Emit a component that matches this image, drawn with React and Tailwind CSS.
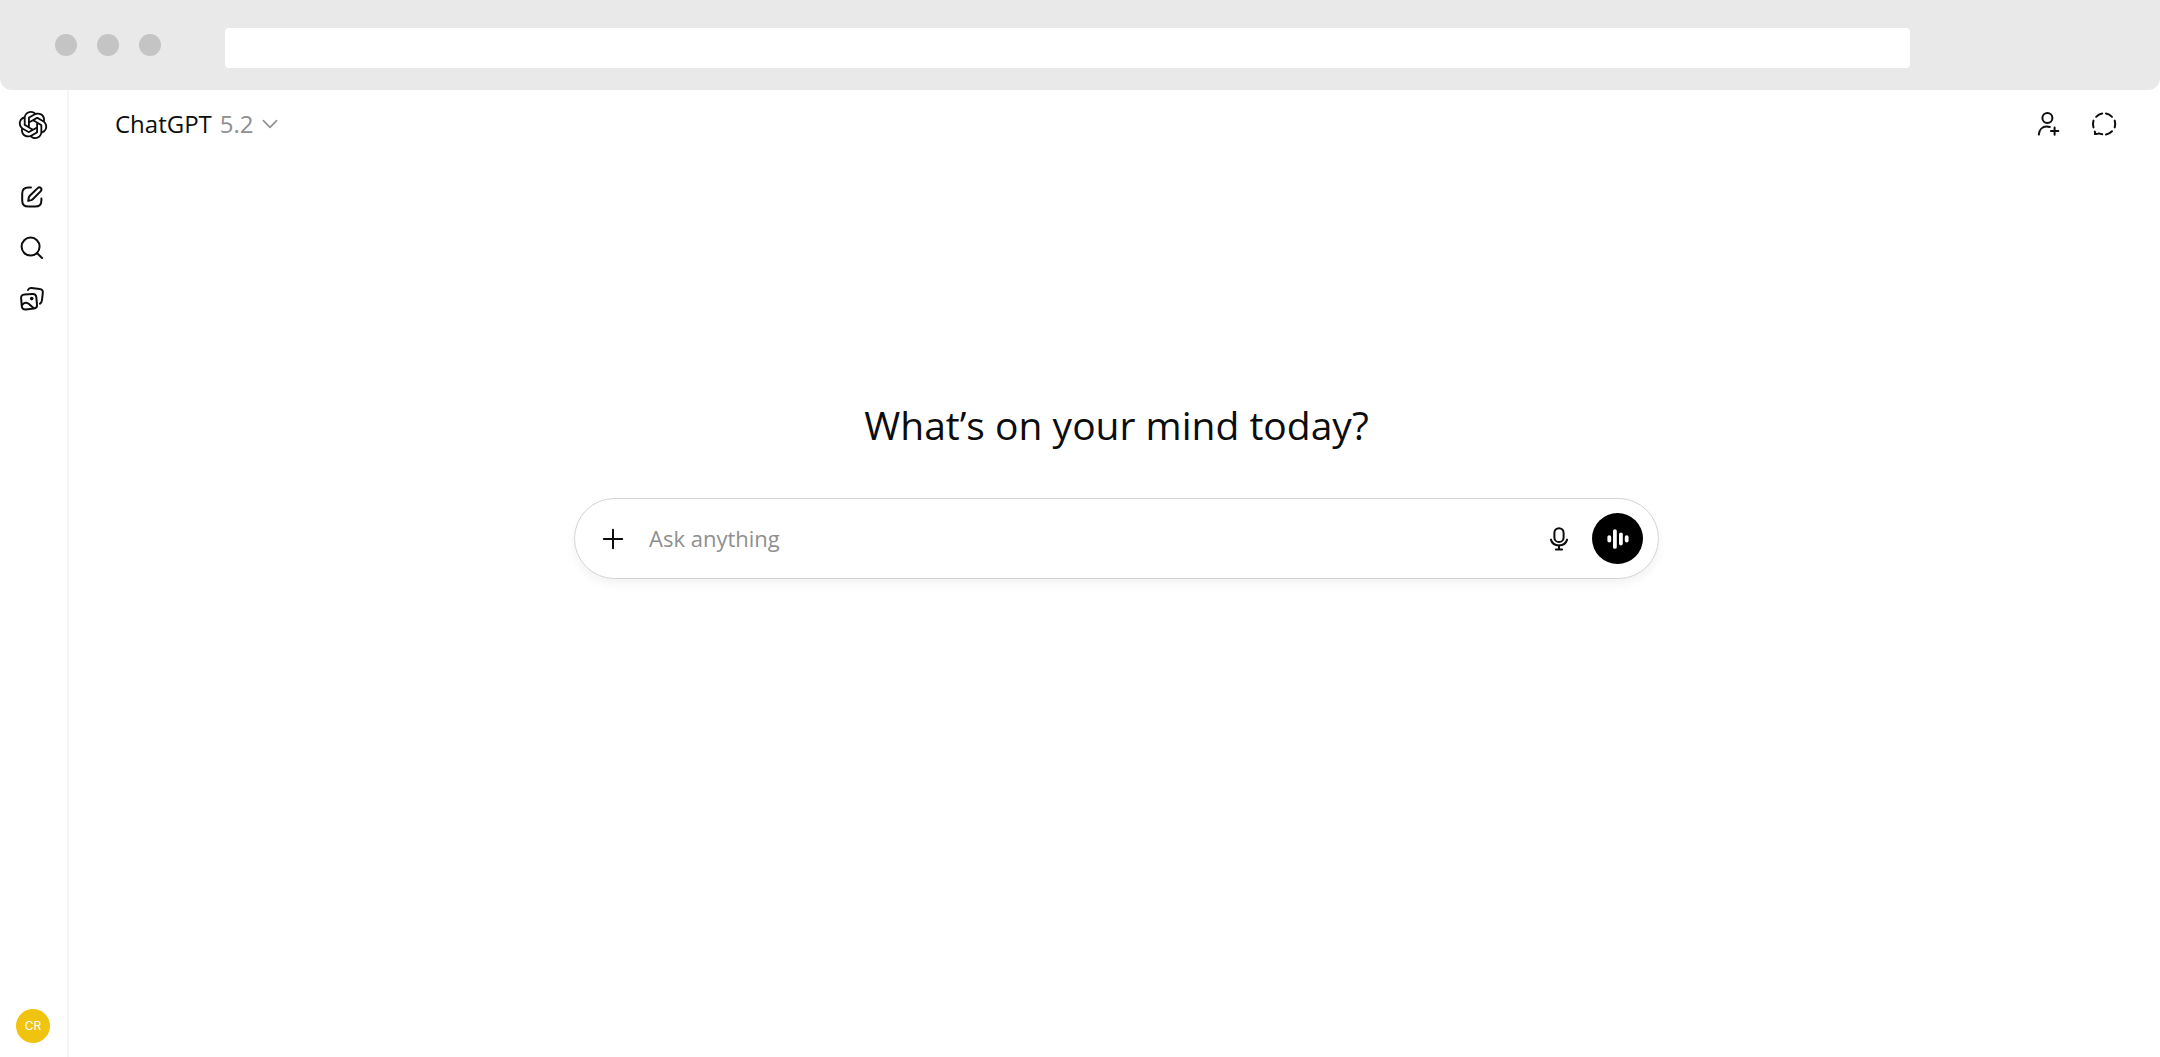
const line = {
  fill: "none",
  stroke: "currentColor",
  strokeWidth: 2,
  strokeLinecap: "round",
  strokeLinejoin: "round",
  "aria-hidden": true,
};

function Logo() {
  return (
    <svg className="size-[34px] shrink-0" viewBox="0 0 20 20" fill="currentColor" aria-hidden="true">
      <path d="M11.2475 18.25C10.6975 18.25 10.175 18.1455 9.67999 17.9365C9.18499 17.7275 8.74499 17.436 8.35999 17.062C7.94199 17.205 7.50749 17.2765 7.05649 17.2765C6.31949 17.2765 5.63749 17.095 5.01049 16.732C4.38349 16.369 3.87749 15.874 3.49249 15.247C3.11849 14.62 2.93149 13.9215 2.93149 13.1515C2.93149 12.8325 2.97549 12.486 3.06349 12.112C2.62349 11.705 2.28249 11.2375 2.04049 10.7095C1.79849 10.1705 1.67749 9.6095 1.67749 9.0265C1.67749 8.4325 1.80399 7.8605 2.05699 7.3105C2.30999 6.7605 2.66199 6.2875 3.11299 5.8915C3.57499 5.4845 4.10849 5.204 4.71349 5.05C4.83449 4.423 5.08749 3.862 5.47249 3.367C5.86849 2.861 6.35249 2.465 6.92449 2.179C7.49649 1.893 8.10699 1.75 8.75599 1.75C9.30599 1.75 9.82849 1.8545 10.3235 2.0635C10.8185 2.2725 11.2585 2.564 11.6435 2.938C12.0615 2.795 12.496 2.7235 12.947 2.7235C13.684 2.7235 14.366 2.905 14.993 3.268C15.62 3.631 16.1205 4.126 16.4945 4.753C16.8795 5.38 17.072 6.0785 17.072 6.8485C17.072 7.1675 17.028 7.514 16.94 7.888C17.38 8.295 17.721 8.768 17.963 9.307C18.205 9.835 18.326 10.3905 18.326 10.9735C18.326 11.5675 18.1995 12.1395 17.9465 12.6895C17.6935 13.2395 17.336 13.718 16.874 14.125C16.423 14.521 15.895 14.796 15.29 14.95C15.169 15.577 14.9105 16.138 14.5145 16.633C14.1295 17.139 13.651 17.535 13.079 17.821C12.507 18.107 11.8965 18.25 11.2475 18.25ZM7.17199 16.1875C7.72199 16.1875 8.20049 16.072 8.60749 15.841L11.7095 14.059C11.8195 13.982 11.8745 13.8775 11.8745 13.7455V12.3265L7.88149 14.62C7.63949 14.763 7.39749 14.763 7.15549 14.62L4.03699 12.8215C4.03699 12.8545 4.03149 12.893 4.02049 12.937C4.02049 12.981 4.02049 13.047 4.02049 13.135C4.02049 13.696 4.15249 14.213 4.41649 14.686C4.69149 15.148 5.07099 15.511 5.55499 15.775C6.03899 16.05 6.57799 16.1875 7.17199 16.1875ZM7.33699 13.498C7.40299 13.531 7.46349 13.5475 7.51849 13.5475C7.57349 13.5475 7.62849 13.531 7.68349 13.498L8.92099 12.7885L4.94449 10.4785C4.70249 10.3355 4.58149 10.121 4.58149 9.835V6.2545C4.03149 6.4965 3.59149 6.8705 3.26149 7.3765C2.93149 7.8715 2.76649 8.4215 2.76649 9.0265C2.76649 9.5655 2.90399 10.0825 3.17899 10.5775C3.45399 11.0725 3.81149 11.4465 4.25149 11.6995L7.33699 13.498ZM11.2475 17.161C11.8305 17.161 12.3585 17.029 12.8315 16.765C13.3045 16.501 13.6785 16.138 13.9535 15.676C14.2285 15.214 14.366 14.697 14.366 14.125V10.561C14.366 10.429 14.311 10.33 14.201 10.264L12.947 9.538V14.1415C12.947 14.4275 12.826 14.642 12.584 14.785L9.46549 16.5835C10.0045 16.9685 10.5985 17.161 11.2475 17.161ZM11.8745 11.122V8.878L10.01 7.822L8.12899 8.878V11.122L10.01 12.178L11.8745 11.122ZM7.05649 5.8585C7.05649 5.5725 7.17749 5.358 7.41949 5.215L10.538 3.4165C9.99899 3.0315 9.40499 2.839 8.75599 2.839C8.17299 2.839 7.64499 2.971 7.17199 3.235C6.69899 3.499 6.32499 3.862 6.04999 4.324C5.78599 4.786 5.65399 5.303 5.65399 5.875V9.4225C5.65399 9.5545 5.70899 9.659 5.81899 9.736L7.05649 10.462V5.8585ZM15.4385 13.7455C15.9885 13.5035 16.423 13.1295 16.742 12.6235C17.072 12.1175 17.237 11.5675 17.237 10.9735C17.237 10.4345 17.0995 9.9175 16.8245 9.4225C16.5495 8.9275 16.192 8.5535 15.752 8.3005L12.6665 6.5185C12.6005 6.4745 12.54 6.458 12.485 6.469C12.43 6.469 12.375 6.4855 12.32 6.5185L11.0825 7.2115L15.0755 9.538C15.1965 9.604 15.2845 9.692 15.3395 9.802C15.4055 9.901 15.4385 10.022 15.4385 10.165V13.7455ZM12.122 5.3635C12.364 5.2095 12.606 5.2095 12.848 5.3635L15.983 7.195C15.983 7.118 15.983 7.019 15.983 6.898C15.983 6.37 15.851 5.8695 15.587 5.3965C15.334 4.9125 14.9655 4.5275 14.4815 4.2415C14.0085 3.9555 13.4585 3.8125 12.8315 3.8125C12.2815 3.8125 11.803 3.928 11.396 4.159L8.29399 5.941C8.18399 6.018 8.12899 6.1225 8.12899 6.2545V7.6735L12.122 5.3635Z" />
    </svg>
  );
}

function ComposeIcon() {
  return (
    <svg className="size-6" viewBox="0 0 24 24" {...line}>
      <path d="M11 2.6 H8.5 C4.2 2.6 2.2 4.6 2.2 8.6 V15.4 C2.2 19.6 4.2 21.6 8.5 21.6 H15 C19.4 21.6 21.4 19.6 21.4 15.4 V13.6" />
      <path d="M8.2 15.9 L8.8 12.6 C8.9 11.9 9.3 11.2 9.8 10.7 L17.7 3.1 C18.6 2.2 19.9 2.2 20.8 3 C21.7 3.9 21.7 5.2 20.8 6.1 L13 14 C12.5 14.5 12 14.9 11.3 15.1 Z" />
    </svg>
  );
}

function SearchIcon() {
  return (
    <svg className="size-6" viewBox="0 0 24 24" {...line}>
      <circle cx="10.6" cy="10.6" r="9" />
      <path d="M17.2 17.2 L22 22" />
    </svg>
  );
}

function PhotosIcon() {
  return (
    <svg className="size-[26px] shrink-0" viewBox="0 0 26 26" {...line}>
      <path d="M5.6 8.6 L13.4 7.9 C15.9 7.7 17 8.6 17.3 11 L18 18.6 C18.2 21.1 17.2 22.3 14.8 22.6 L6.8 23.4 C4.3 23.6 3 22.6 2.8 20.1 L2.1 12.4 C1.9 9.9 3.1 8.8 5.6 8.6 Z" />
      <path d="M3 19 C5.4 16.2 7.8 16 10 18 L14.8 22.2" />
      <path d="M9 4 C9.6 2.5 10.8 1.9 12.6 2.1 L20.6 3 C23 3.2 24.1 4.4 23.8 6.8 L23 14 C22.8 15.8 22.2 16.8 21 17.6" />
      <circle cx="12.7" cy="12.6" r="1.8" fill="currentColor" stroke="none" />
    </svg>
  );
}

function AddPersonIcon() {
  return (
    <svg className="size-7" viewBox="0 0 28 28" {...line}>
      <circle cx="13.4" cy="8" r="5" />
      <path d="M4.8 24.6 C5.2 19.4 8.6 16.6 12.6 16.6 C13.8 16.6 14.8 16.7 15.8 17" />
      <path d="M20.6 17.4 V24.8 M16.9 21.1 H24.3" />
    </svg>
  );
}

function TemporaryChatIcon() {
  return (
    <svg className="size-7" viewBox="0 0 28 28" {...line}>
      <path d="M6.2 6.8 A11 11 0 0 1 12.2 3.4" />
      <path d="M16 3.4 A11 11 0 0 1 22 6.8" />
      <path d="M24.7 10.6 A11 11 0 0 1 24.7 17.4" />
      <path d="M22 21.2 A11 11 0 0 1 16 24.4" />
      <path d="M3.5 17.4 A11 11 0 0 1 3.5 10.6" />
      <path d="M12.2 24.3 C11 24.1 10 23.8 9 23.4 C8 23.9 6.6 24.2 4.9 24 C5.3 23.2 5.3 22.3 4.8 21.5" />
    </svg>
  );
}

function ChevronIcon() {
  return (
    <svg className="size-4" viewBox="0 0 16 16" {...line} strokeWidth="1.6">
      <path d="M1.4 4.6 L8 11.4 L14.6 4.6" />
    </svg>
  );
}

function PlusIcon() {
  return (
    <svg className="size-6" viewBox="0 0 24 24" {...line}>
      <path d="M12 2.8 V21.2 M2.8 12 H21.2" />
    </svg>
  );
}

function MicIcon() {
  return (
    <svg className="size-6" viewBox="0 0 24 24" {...line}>
      <rect x="7.4" y="1.2" width="9.2" height="13.8" rx="4.6" />
      <path d="M3.9 12.6 C5 16.4 8.2 18.4 12 18.4 C15.8 18.4 19 16.4 20.1 12.6" />
      <path d="M12 18.4 V22.4 M8.9 22.6 H15.1" />
    </svg>
  );
}

function VoiceIcon() {
  return (
    <svg className="size-6" viewBox="0 0 24 24" fill="currentColor" aria-hidden="true">
      <rect x="1.4" y="8.2" width="3.8" height="7.2" rx="1.9" />
      <rect x="7" y="2.2" width="3.8" height="19.6" rx="1.9" />
      <rect x="13" y="5.4" width="3.8" height="13" rx="1.9" />
      <rect x="18.8" y="8.2" width="3.8" height="7.2" rx="1.9" />
    </svg>
  );
}

function BrowserBar() {
  return (
    <div className="flex h-[90px] shrink-0 items-center rounded-b-xl bg-[#e9e9e9] pl-[55px]">
      <div className="flex w-[170px] shrink-0 items-center gap-5">
        <span className="size-[22px] rounded-full bg-[#c4c4c4]" />
        <span className="size-[22px] rounded-full bg-[#c4c4c4]" />
        <span className="size-[22px] rounded-full bg-[#c4c4c4]" />
      </div>
      <input
        type="text"
        aria-label="Address"
        className="mt-1.5 mr-[250px] h-10 min-w-0 flex-1 rounded bg-white px-3 outline-none"
      />
    </div>
  );
}

function Sidebar() {
  return (
    <aside className="flex w-[69px] shrink-0 flex-col border-r-2 border-[#f5f5f5] pb-3.5 pl-4">
      <a href="#" aria-label="Home" className="flex h-[69px] w-[34px] items-center justify-center">
        <Logo />
      </a>
      <nav className="mt-3 flex w-8 flex-col">
        <button type="button" aria-label="New chat" className="flex h-[51px] items-center justify-center">
          <ComposeIcon />
        </button>
        <button type="button" aria-label="Search" className="flex h-[51px] items-center justify-center">
          <SearchIcon />
        </button>
        <button type="button" aria-label="Images" className="flex h-[51px] items-center justify-center">
          <PhotosIcon />
        </button>
      </nav>
      <button
        type="button"
        aria-label="Account"
        className="mt-auto flex size-[34px] items-center justify-center rounded-full bg-[#f0c30f] font-['Inter',sans-serif] text-xs text-white"
      >
        CR
      </button>
    </aside>
  );
}

function Composer() {
  return (
    <form className="mt-12 flex h-[81px] w-full max-w-[1085px] items-center rounded-full border border-[#d4d4d4] bg-white pr-[15px] pl-[26px] shadow-[0_5px_10px_rgba(0,0,0,0.05)]">
      <button type="button" aria-label="Add files" className="shrink-0">
        <PlusIcon />
      </button>
      <input
        type="text"
        aria-label="Ask anything"
        placeholder="Ask anything"
        className="ml-6 min-w-0 flex-1 bg-transparent text-[22px] outline-none placeholder:text-[#8f8f8f]"
      />
      <button type="button" aria-label="Dictate" className="shrink-0">
        <MicIcon />
      </button>
      <button
        type="button"
        aria-label="Use voice"
        className="ml-[21px] flex size-[51px] shrink-0 items-center justify-center rounded-full bg-black text-white"
      >
        <VoiceIcon />
      </button>
    </form>
  );
}

export default function App() {
  return (
    <div className="flex min-h-screen flex-col bg-white font-['Open_Sans','Noto_Sans',sans-serif] text-[#0d0d0d]">
      <BrowserBar />
      <div className="flex flex-1">
        <Sidebar />
        <div className="flex min-w-0 flex-1 flex-col">
          <header className="flex h-[68px] items-center justify-between pr-[42px] pl-[46px]">
            <button type="button" className="flex items-center gap-2 text-2xl">
              <span className="flex gap-2">
                <span>ChatGPT</span>
                <span className="text-[#8f8f8f]">5.2</span>
              </span>
              <span className="text-[#8f8f8f]">
                <ChevronIcon />
              </span>
            </button>
            <div className="flex gap-7">
              <button type="button" aria-label="Add people">
                <AddPersonIcon />
              </button>
              <button type="button" aria-label="Temporary chat">
                <TemporaryChatIcon />
              </button>
            </div>
          </header>
          <main className="flex flex-col items-center pt-[242px] pr-5 pl-6">
            <h1 className="text-[39px] leading-[50px]">What’s on your mind today?</h1>
            <Composer />
          </main>
        </div>
      </div>
    </div>
  );
}
